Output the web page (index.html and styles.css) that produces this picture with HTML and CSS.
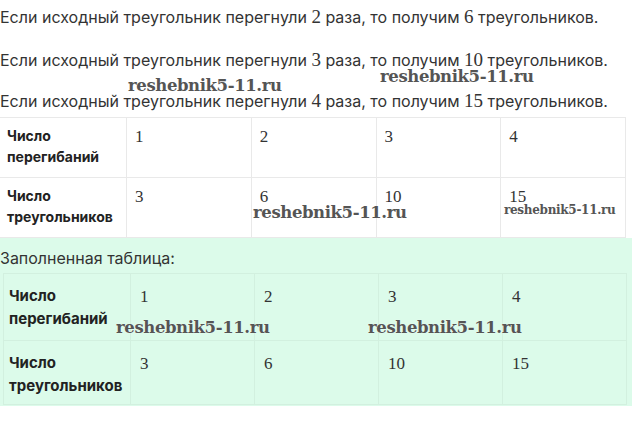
FILE: index.html
```html
<!DOCTYPE html>
<html lang="ru">
<head>
<meta charset="utf-8">
<link rel="stylesheet" href="styles.css">
</head>
<body>
<div class="page">
  <p class="line first">Если исходный треугольник перегнули <span class="num">2</span> раза, то получим <span class="num">6</span> треугольников.</p>
  <p class="line">Если исходный треугольник перегнули <span class="num">3</span> раза, то получим <span class="num">10</span> треугольников.</p>
  <p class="line last">Если исходный треугольник перегнули <span class="num">4</span> раза, то получим <span class="num">15</span> треугольников.</p>
  <table class="grid t1">
    <tr><th>Число перегибаний</th><td>1</td><td>2</td><td>3</td><td>4</td></tr>
    <tr><th>Число треугольников</th><td>3</td><td>6</td><td>10</td><td>15</td></tr>
  </table>
  <div class="solved">
    <p class="caption">Заполненная таблица:</p>
    <table class="grid t2">
      <tr><th>Число перегибаний</th><td>1</td><td>2</td><td>3</td><td>4</td></tr>
      <tr><th>Число треугольников</th><td>3</td><td>6</td><td>10</td><td>15</td></tr>
    </table>
  </div>
  <span class="wm w1">reshebnik5-11.ru</span>
  <span class="wm w2">reshebnik5-11.ru</span>
  <span class="wm w3">reshebnik5-11.ru</span>
  <span class="wm small w4">reshebnik5-11.ru</span>
  <span class="wm w5">reshebnik5-11.ru</span>
  <span class="wm w6">reshebnik5-11.ru</span>
</div>
</body>
</html>
```

FILE: styles.css
```css
html, body {
  margin: 0;
  padding: 0;
  background: #ffffff;
}
.page {
  position: relative;
  width: 632px;
  height: 438px;
  overflow: hidden;
  padding-top: 5px;
  box-sizing: border-box;
  font-family: Inter, "Noto Sans", sans-serif;
  color: #333333;
}
.line {
  margin: 0 0 17px 0;
  font-size: 16px;
  line-height: 24px;
  height: 24px;
  white-space: nowrap;
}
.line.first {
  margin-bottom: 19px;
}
.line.last {
  margin-bottom: 4px;
}
.num {
  font-family: "Liberation Serif", serif;
  font-size: 19px;
  line-height: 1;
}
.grid {
  border-collapse: collapse;
  table-layout: fixed;
}
.grid th, .grid td {
  border: 1px solid #e9e9e9;
  vertical-align: top;
  text-align: left;
  box-sizing: border-box;
}
.grid th {
  font-weight: 700;
  color: #222222;
}
.grid td {
  font-family: "Liberation Serif", serif;
  font-size: 17px;
  line-height: 20px;
  color: #333333;
}
.t1 {
  width: 627px;
  margin-left: -1px;
}
.t1 th {
  width: 127px;
  padding: 7px 7px 0 7px;
  font-size: 14px;
  line-height: 21px;
}
.t1 td {
  padding: 9px 8px 0 8px;
}
.t1 th, .t1 td {
  height: 60px;
}
.solved {
  background: #dcfbea;
  padding: 8px 0 1px 0;
}
.caption {
  margin: 0 0 3px 0;
  font-size: 16px;
  line-height: 24px;
}
.t2 {
  width: 624px;
  margin-left: 3px;
}
.t2 th {
  width: 127px;
  padding: 10px 5px 0 5px;
  font-size: 15px;
  line-height: 23px;
}
.t2 td {
  padding: 13px 9px 0 9px;
}
.t2 tr:first-child th, .t2 tr:first-child td { height: 67px; }
.t2 tr:last-child th, .t2 tr:last-child td { height: 64px; }
.t2 th, .t2 td {
  border-color: #d2f0df;
}
.wm {
  position: absolute;
  font-family: "DejaVu Serif", "Liberation Serif", serif;
  font-weight: 700;
  font-size: 16.5px;
  line-height: 16px;
  color: #555555;
  letter-spacing: -0.4px;
  text-shadow: 0 0 1px #ffffff;
  white-space: nowrap;
}
.wm.small {
  font-size: 12px;
  line-height: 12px;
  letter-spacing: -0.3px;
}
.w1 { left: 128px; top: 78px; }
.w2 { left: 380px; top: 69px; }
.w3 { left: 253px; top: 205px; }
.w4 { left: 504px; top: 204px; }
.w5 { left: 116px; top: 320px; }
.w6 { left: 368px; top: 320px; }
```
